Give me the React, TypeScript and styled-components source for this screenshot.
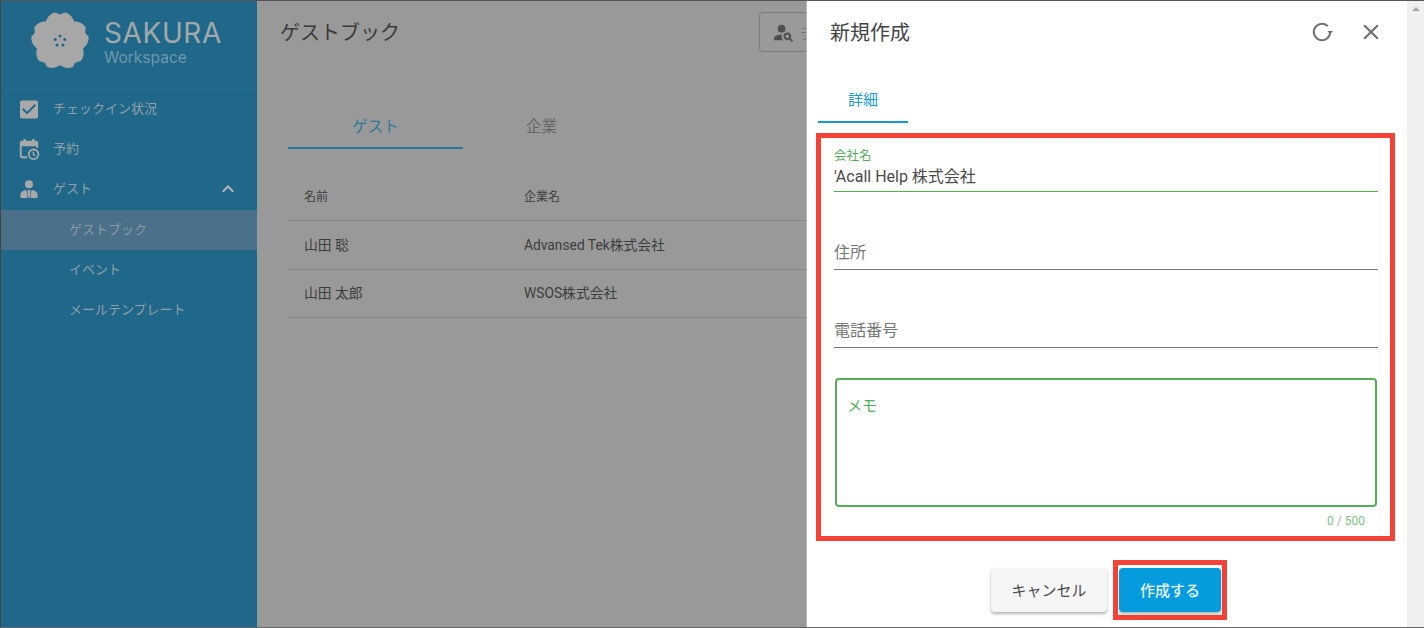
import { createGlobalStyle } from "styled-components";
import styled from "styled-components";
import { MdCheckBox, MdClose, MdExpandLess, MdPersonSearch } from "react-icons/md";

const GlobalStyle = createGlobalStyle`
  html, body {
    margin: 0;
    padding: 0;
    background: #fff;
  }
  * {
    box-sizing: border-box;
  }
  body {
    font-family: Roboto, "Noto Sans CJK JP", sans-serif;
  }
`;

const Frame = styled.div`
  width: 1424px;
  height: 628px;
  display: flex;
  overflow: hidden;
  border-top: 1px solid #555;
  border-left: 1px solid #444;
  border-bottom: 1px solid #666;
`;

const Sidebar = styled.aside`
  width: 256px;
  flex-shrink: 0;
  background: #206889;
  color: #a3a8aa;
`;

const Brand = styled.div`
  height: 89px;
  padding: 9px 0 0 29px;
  display: flex;
  gap: 14px;
  border-bottom: 1px solid #2a6d8c;
`;

const BrandText = styled.div`
  padding-top: 9px;
`;

const BrandName = styled.div`
  font-family: "Inter", sans-serif;
  font-size: 28px;
  line-height: 29px;
  letter-spacing: 0.6px;
  color: #a2a8aa;
`;

const BrandSub = styled.div`
  font-family: "Inter", sans-serif;
  font-size: 15.500px;
  line-height: 20px;
  color: #6f98aa;
`;

const NavRow = styled.div<{ $active?: boolean; $sub?: boolean }>`
  height: 40px;
  padding: 0 17px ${(p) => (p.$sub ? "4px" : "2px")} ${(p) => (p.$sub ? "68px" : "16px")};
  display: flex;
  align-items: center;
  font-size: 13px;
  background: ${(p) => (p.$active ? "#4a7189" : "transparent")};
  color: ${(p) => (p.$active ? "#8a9aa4" : "#929fa6")};
`;

const NavIcon = styled.span`
  width: 24px;
  height: 24px;
  margin-right: 12px;
  display: flex;
  align-items: center;
  justify-content: center;
  color: #a9a9a9;
`;

const NavLabel = styled.span`
  flex: 1;
  margin-bottom: 4px;
`;

const Main = styled.main`
  width: 550px;
  flex-shrink: 0;
  background: #999;
  color: #3a3a3a;
  overflow: hidden;
`;

const MainHead = styled.div`
  height: 61px;
  padding: 11px 0 0 23px;
  display: flex;
  justify-content: space-between;
`;

const PageTitle = styled.h1`
  margin: 2px 0 0;
  font-size: 20px;
  font-weight: 400;
  line-height: 38px;
  color: #3b3b3b;
`;

const SearchBox = styled.div`
  width: 48px;
  height: 40px;
  padding-left: 12px;
  display: flex;
  align-items: center;
  gap: 5px;
  white-space: nowrap;
  overflow: hidden;
  border: 1px solid #7d7d7d;
  border-right: 0;
  border-radius: 4px 0 0 4px;
  font-size: 15px;
  color: #6e6e6e;

  svg {
    flex-shrink: 0;
    color: #4f4f4f;
  }
`;

const TabBar = styled.div`
  margin: 29px 0 0 31px;
  display: flex;
`;

const PageTab = styled.div<{ $active?: boolean }>`
  width: ${(p) => (p.$active ? "175px" : "157px")};
  height: 58px;
  padding-top: 24px;
  text-align: center;
  font-size: 15.500px;
  line-height: 24px;
  color: ${(p) => (p.$active ? "#2b7a9c" : "#666")};
  border-bottom: 2px solid ${(p) => (p.$active ? "#21789b" : "transparent")};
`;

const Table = styled.div`
  margin: 23px 0 0 31px;
`;

const Row = styled.div<{ $head?: boolean }>`
  height: ${(p) => (p.$head ? "49px" : "48.5px")};
  display: grid;
  grid-template-columns: 220px 1fr;
  align-items: center;
  padding: 0 0 2px 16px;
  font-size: ${(p) => (p.$head ? "12px" : "13.800px")};
  color: #3d3d3d;
  border-bottom: 1px solid #868686;
  white-space: nowrap;
`;

const Drawer = styled.section`
  width: 600px;
  flex-shrink: 0;
  background: #fff;
  padding: 0 12px 0 9px;
  box-shadow: -1px 0 0 #b8b8b8;
`;

const DrawerHead = styled.div`
  height: 61px;
  padding: 0 11px 0 14px;
  display: flex;
  align-items: center;
  justify-content: space-between;
`;

const DrawerTitle = styled.h2`
  margin: 0;
  font-size: 20px;
  font-weight: 400;
  color: #444;
`;

const HeadActions = styled.div`
  display: flex;
  align-items: center;
  gap: 25px;
  color: #707070;
`;

const DrawerTab = styled.div`
  width: 90px;
  height: 61px;
  margin: 0 0 0 2px;
  padding-top: 26px;
  text-align: center;
  font-size: 15px;
  line-height: 24px;
  color: #1a9ad0;
  border-bottom: 2px solid #1a9ad0;
`;

const FormBox = styled.div`
  width: 579px;
  height: 408px;
  margin-top: 10px;
  padding: 11px 12px 0 13px;
  border: 5px solid #f44336;
`;

const Field = styled.div<{ $focus?: boolean; $gap?: number }>`
  height: ${(p) => (p.$focus ? "43px" : "38px")};
  margin-top: ${(p) => p.$gap ?? 0}px;
  border-bottom: 1px solid ${(p) => (p.$focus ? "#4caf50" : "#777")};
`;

const FieldLabel = styled.div`
  font-size: 12.500px;
  line-height: 14px;
  color: #55ad59;
`;

const FieldValue = styled.div`
  margin-top: 3px;
  font-size: 16px;
  line-height: 22px;
  color: #4a4a4a;
`;

const Placeholder = styled.div`
  padding-top: 10px;
  font-size: 16px;
  line-height: 22px;
  color: #777;
`;

const MemoBox = styled.div`
  width: 542px;
  height: 129px;
  margin: 30px 0 0 1px;
  padding: 15px 10px;
  border: 2px solid #55ad59;
  border-radius: 4px;
  font-size: 15px;
  line-height: 22px;
  color: #55ad59;
`;

const Counter = styled.div`
  width: 531px;
  margin-top: 6px;
  text-align: right;
  font-size: 12px;
  line-height: 16px;
  color: #7dbe80;
`;

const Actions = styled.div`
  margin-top: 19px;
  padding-left: 175px;
  display: flex;
  align-items: center;
  gap: 6px;
`;

const Button = styled.button<{ $primary?: boolean }>`
  height: 44px;
  width: ${(p) => (p.$primary ? "102px" : "116px")};
  border: 0;
  border-radius: 4px;
  padding: 0 0 2px;
  font-family: inherit;
  font-size: 15px;
  font-weight: ${(p) => (p.$primary ? 500 : 400)};
  color: ${(p) => (p.$primary ? "#e4f3fa" : "#4a4a4a")};
  background: ${(p) => (p.$primary ? "#069bdc" : "#f5f5f5")};
  box-shadow: 0 2px 3px rgba(0, 0, 0, 0.3);
`;

const Highlight = styled.div`
  width: 114px;
  height: 60px;
  padding: 3px 1px;
  border: 5px solid #f44336;
`;

const ScrollTrack = styled.div`
  width: 17px;
  flex-shrink: 0;
  padding-top: 6px;
  display: flex;
  justify-content: center;
  background: #f0f0f0;
`;

const ScrollArrow = styled.div`
  width: 0;
  height: 0;
  border-left: 4px solid transparent;
  border-right: 4px solid transparent;
  border-bottom: 4px solid #a6a6a6;
`;

const PETALS = [0, 72, 144, 216, 288];

const Flower = () => (
  <svg width="60" height="60" viewBox="0 0 60 60">
    <g fill="#a7a7a7">
      {PETALS.map((a) => (
        <path
          key={a}
          transform={`rotate(${a} 30 31)`}
          d="M30 31L15 20C14 12 18 4 25 2.500L30 4.500L35 2.500C42 4 46 12 45 20z"
        />
      ))}
      <circle cx="30" cy="31" r="17" />
    </g>
    <g fill="#206889">
      {PETALS.map((a) => (
        <circle key={a} cx="30" cy="26" r="1.500" transform={`rotate(${a} 30 31)`} />
      ))}
    </g>
  </svg>
);

const CalendarClock = () => (
  <svg width="22" height="22" viewBox="0 0 24 24" fill="currentColor">
    <path d="M4 3h2V1h2.500v2h7V1H18v2h2a2 2 0 0 1 2 2v6h-2V9H4v11h6v2H4a2 2 0 0 1-2-2V5a2 2 0 0 1 2-2z" />
    <path
      fillRule="evenodd"
      d="M17 11.500a6.250 6.250 0 1 1 0 12.500 6.250 6.250 0 0 1 0-12.500zm0 2a4.250 4.250 0 1 0 0 8.500 4.250 4.250 0 0 0 0-8.500zM16 15h1.500v2.700l2 1.200-.7 1.100L16 18.500z"
    />
  </svg>
);

const UserTie = () => (
  <svg width="18" height="18" viewBox="0 0 18 18" fill="currentColor">
    <circle cx="9" cy="4.300" r="4" />
    <path d="M.5 18v-3.500c0-2.500 2.500-4 6-4.500l1 8zM17.500 18v-3.500c0-2.500-2.500-4-6-4.500l-1 8zM8 10h2l.6 2-.6 5.500H8L7.400 12z" />
  </svg>
);

const RefreshIcon = () => (
  <svg width="22" height="22" viewBox="0 0 22 22" fill="none">
    <path
      d="M16.300 4.700A8.200 8.200 0 1 0 19.200 11"
      stroke="currentColor"
      strokeWidth="2"
      strokeLinecap="round"
    />
    <path d="M16.500 10H22l-2.800 3.500z" fill="currentColor" />
  </svg>
);

export default function App() {
  return (
    <>
      <GlobalStyle />
      <Frame>
        <Sidebar>
          <Brand>
            <Flower />
            <BrandText>
              <BrandName>SAKURA</BrandName>
              <BrandSub>Workspace</BrandSub>
            </BrandText>
          </Brand>
          <NavRow>
            <NavIcon>
              <MdCheckBox size={25} />
            </NavIcon>
            <NavLabel>チェックイン状況</NavLabel>
          </NavRow>
          <NavRow>
            <NavIcon>
              <CalendarClock />
            </NavIcon>
            <NavLabel>予約</NavLabel>
          </NavRow>
          <NavRow>
            <NavIcon>
              <UserTie />
            </NavIcon>
            <NavLabel>ゲスト</NavLabel>
            <MdExpandLess size={24} color="#b5b8b8" />
          </NavRow>
          <NavRow $sub $active>
            ゲストブック
          </NavRow>
          <NavRow $sub>イベント</NavRow>
          <NavRow $sub>メールテンプレート</NavRow>
        </Sidebar>

        <Main>
          <MainHead>
            <PageTitle>ゲストブック</PageTitle>
            <SearchBox>
              <MdPersonSearch size={23} />
              <span>テ</span>
            </SearchBox>
          </MainHead>
          <TabBar>
            <PageTab $active>ゲスト</PageTab>
            <PageTab>企業</PageTab>
          </TabBar>
          <Table>
            <Row $head>
              <span>名前</span>
              <span>企業名</span>
            </Row>
            <Row>
              <span>山田 聡</span>
              <span>Advansed Tek株式会社</span>
            </Row>
            <Row>
              <span>山田 太郎</span>
              <span>WSOS株式会社</span>
            </Row>
          </Table>
        </Main>

        <Drawer>
          <DrawerHead>
            <DrawerTitle>新規作成</DrawerTitle>
            <HeadActions>
              <RefreshIcon />
              <MdClose size={26} />
            </HeadActions>
          </DrawerHead>
          <DrawerTab>詳細</DrawerTab>
          <FormBox>
            <Field $focus>
              <FieldLabel>会社名</FieldLabel>
              <FieldValue>'Acall Help 株式会社</FieldValue>
            </Field>
            <Field $gap={40}>
              <Placeholder>住所</Placeholder>
            </Field>
            <Field $gap={40}>
              <Placeholder>電話番号</Placeholder>
            </Field>
            <MemoBox>メモ</MemoBox>
            <Counter>0 / 500</Counter>
          </FormBox>
          <Actions>
            <Button>キャンセル</Button>
            <Highlight>
              <Button $primary>作成する</Button>
            </Highlight>
          </Actions>
        </Drawer>

        <ScrollTrack>
          <ScrollArrow />
        </ScrollTrack>
      </Frame>
    </>
  );
}
